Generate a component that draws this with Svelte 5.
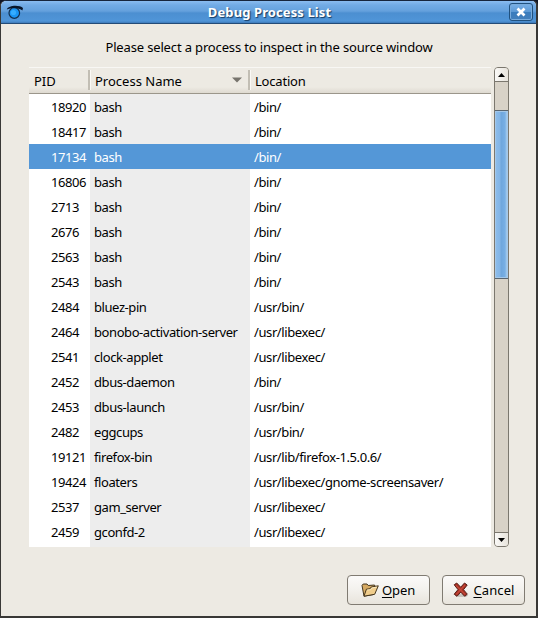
<script>
  const processes = [
    ['18920', 'bash', '/bin/'],
    ['18417', 'bash', '/bin/'],
    ['17134', 'bash', '/bin/'],
    ['16806', 'bash', '/bin/'],
    ['2713', 'bash', '/bin/'],
    ['2676', 'bash', '/bin/'],
    ['2563', 'bash', '/bin/'],
    ['2543', 'bash', '/bin/'],
    ['2484', 'bluez-pin', '/usr/bin/'],
    ['2464', 'bonobo-activation-server', '/usr/libexec/'],
    ['2541', 'clock-applet', '/usr/libexec/'],
    ['2452', 'dbus-daemon', '/bin/'],
    ['2453', 'dbus-launch', '/usr/bin/'],
    ['2482', 'eggcups', '/usr/bin/'],
    ['19121', 'firefox-bin', '/usr/lib/firefox-1.5.0.6/'],
    ['19424', 'floaters', '/usr/libexec/gnome-screensaver/'],
    ['2537', 'gam_server', '/usr/libexec/'],
    ['2459', 'gconfd-2', '/usr/libexec/']
  ];
  let selected = $state('17134');
</script>

<div class="desktop">
  <div class="window">
    <header class="titlebar">
      <svg class="logo" width="18" height="18" viewBox="0 0 18 18">
        <circle cx="8.300" cy="10" r="5.300" fill="#1895f5" stroke="#123050" stroke-width="1.200" />
        <circle cx="7.500" cy="9.500" r="2.600" fill="#35adff" />
        <path d="M.8 6.500C2.500 1.800 14 1.800 17 5L16.400 7.500C13.500 4.500 5 4 .8 6.500Z" fill="#07152a" />
      </svg>
      <h1>Debug Process List</h1>
      <button class="close" aria-label="Close">
        <svg width="10" height="10" viewBox="0 0 10 10">
          <path d="M1.500 1.500L8.500 8.500M8.500 1.500L1.500 8.500" stroke="#fff" stroke-width="2.700" />
        </svg>
      </button>
    </header>
    <main>
      <p class="prompt">Please select a process to inspect in the source window</p>
      <div class="browser">
        <div class="table">
          <div class="row head">
            <div class="pid">PID</div>
            <div class="name">Process Name
              <svg width="10" height="6" viewBox="0 0 10 6"><path d="M0 .500H10L5 5.500Z" fill="#77746d" /></svg>
            </div>
            <div class="loc">Location</div>
          </div>
          <div class="body">
            {#each processes as [pid, name, location]}
              <!-- svelte-ignore a11y_click_events_have_key_events, a11y_no_static_element_interactions -->
              <div class="row item" class:selected={pid === selected} onclick={() => (selected = pid)}>
                <div class="pid">{pid}</div>
                <div class="name">{name}</div>
                <div class="loc">{location}</div>
              </div>
            {/each}
            <div class="row rest"><div class="pid"></div><div class="name"></div><div class="loc"></div></div>
          </div>
        </div>
        <div class="scrollbar">
          <div class="step up"><svg width="7" height="4" viewBox="0 0 7 4"><path d="M0 4L3.500 0L7 4Z" /></svg></div>
          <div class="gap"></div>
          <div class="thumb"></div>
          <div class="trough"></div>
          <div class="step down"><svg width="7" height="4" viewBox="0 0 7 4"><path d="M0 0H7L3.500 4Z" /></svg></div>
        </div>
      </div>
      <div class="actions">
        <button class="btn open">
          <svg width="18" height="16" viewBox="0 0 18 16">
            <path d="M1 3.500L2.200 2H6L7.200 3.500L13.500 3L14.500 5.500L12.500 12.500L3 14.200Z" fill="#d5a962" stroke="#44351d" stroke-linejoin="round" />
            <path d="M3 14.200L5.400 7.200L9 6.800L10.200 5L17.300 3.800L13.700 12.300Z" fill="#f0cd8c" stroke="#44351d" stroke-linejoin="round" />
            <path d="M6.200 8L9.600 7.700L10.800 6L15.700 5.100" fill="none" stroke="#fae9bd" />
          </svg>
          <span><u>O</u>pen</span>
        </button>
        <button class="btn cancel">
          <svg width="16" height="16" viewBox="0 0 16 16">
            <ellipse cx="8.500" cy="13.600" rx="6.500" ry="1.500" fill="#c6c3bd" />
            <path d="M1.200 2.800L3.700 1L7.700 5.200L11.500 1L14.200 3L10.500 7.700L14.300 12.200L11.700 14.300L7.800 10.200L4 14.300L1.200 12.200L5 7.600Z" fill="#a82f24" stroke="#572019" />
            <path d="M3 3.300L12 12.300M12 3L3.300 12.300" stroke="#c54a3a" stroke-width="1.200" />
          </svg>
          <span><u>C</u>ancel</span>
        </button>
      </div>
    </main>
  </div>
</div>

<style>
  * { box-sizing: border-box; }
  .desktop {
    width: 538px; height: 618px; background: #101525; overflow: hidden;
    font: 13px/16px "Noto Sans", "Open Sans", sans-serif; color: #000;
  }
  .window {
    width: 538px; height: 618px; border: 1px solid #393836; border-top-color: #17253c;
    border-right-width: 2px; border-bottom-width: 2px;
    border-radius: 6px 6px 0 0; background: #edeae3; overflow: hidden;
    display: flex; flex-direction: column;
  }
  .titlebar {
    height: 23px; flex: none; display: flex; align-items: center; padding: 0 3px 0 5px;
    border-bottom: 1px solid #234b77;
    background: linear-gradient(#8abcf0 0, #72abe5 4px, #65a1dd 10px, #4c8fd1 12px, #5095d8 20px, #3d79b8 22px);
  }
  .logo { flex: none; }
  h1 {
    flex: 1; margin: 0; padding-left: 6px; text-align: center; color: #fff; font-size: 13px; line-height: 18px;
    font-weight: 700; letter-spacing: 0.1px; text-shadow: 1px 1px 1px #173b62;
  }
  .close {
    width: 24px; height: 18px; padding: 0; border: 1px solid #20517f; border-radius: 3px;
    display: flex; align-items: center; justify-content: center;
    background: linear-gradient(#79b0e7, #5b98d4 50%, #397cbd 52%, #437fbb);
    box-shadow: inset 0 0 0 1px #78abdc;
  }
  main { flex: 1; display: flex; flex-direction: column; padding: 15px 27px 11px 28px; }
  .prompt { margin: 0; height: 28px; line-height: 17px; text-align: center; white-space: nowrap; letter-spacing: -0.15px; }
  .browser { height: 480px; display: flex; gap: 3px; }
  .table { width: 462px; display: flex; flex-direction: column; }
  .row { display: grid; grid-template-columns: 61px 160px 241px; white-space: nowrap; }
  .head {
    height: 27px; line-height: 27px; border-top: 1px solid #f8f7f4; border-bottom: 1px solid #9b968b;
    background: linear-gradient(#edeae3 19px, #dedad1);
  }
  .head > div { height: 25px; padding-left: 5px; }
  .head .name, .head .loc { position: relative; }
  .head .loc { letter-spacing: -0.2px; }
  .head .name::before, .head .loc::before {
    content: ""; position: absolute; left: -2px; top: 2px; width: 2px; height: 20px;
    background: #c2beb4; border-right: 1px solid #faf9f6;
  }
  .head .name { display: flex; justify-content: space-between; align-items: center; padding: 1px 8px 0 5px; }
  .head svg { margin-top: -3px; }
  .body { flex: 1; background: #fff; }
  .item { height: 25px; line-height: 26px; }
  .item .pid { padding-left: 22px; letter-spacing: -0.45px; }
  .body .name { background: #ededed; padding-left: 4px; letter-spacing: -0.42px; }
  .body .loc { padding-left: 4px; letter-spacing: -0.4px; }
  .selected, .body .selected .name { background: #5497d7; color: #fff; }
  .rest { height: 3px; }
  .scrollbar {
    width: 15px; border: 1px solid #7b776e; border-radius: 4px; overflow: hidden;
    display: flex; flex-direction: column; background: #d8d2c7;
  }
  .step { height: 14px; flex: none; display: flex; align-items: center; justify-content: center; background: linear-gradient(90deg, #faf9f7, #e8e4dc); }
  .up { border-bottom: 1px solid #7b776e; }
  .down { border-top: 1px solid #7b776e; }
  .gap { height: 28px; flex: none; }
  .thumb {
    height: 169px; flex: none; border-top: 1px solid #59656f; border-bottom: 1px solid #59656f;
    background: linear-gradient(90deg, #8ebeeb 0, #83b5e6 5px, #6fa6dc 6px, #78afe4 10px, #a8ccec 12px);
    box-shadow: inset 0 0 0 1px #a5c8e8;
  }
  .trough { flex: 1; }
  .actions { margin-top: auto; height: 30px; display: flex; justify-content: flex-end; gap: 12px; margin-right: -16px; }
  .btn {
    width: 83px; height: 30px; padding: 0 0 1px; border: 1px solid #807b72; border-radius: 4px;
    font: inherit; color: #000; display: flex; align-items: center; justify-content: center; gap: 3px;
    letter-spacing: -0.1px;
    background: linear-gradient(#fbfaf9, #f3f1ed 50%, #e8e4dc);
  }
  .open { padding-right: 1px; }
  .cancel { letter-spacing: 0.1px; gap: 4px; padding-left: 1px; }
  u { text-underline-offset: 2px; text-decoration-thickness: 1px; }
</style>
